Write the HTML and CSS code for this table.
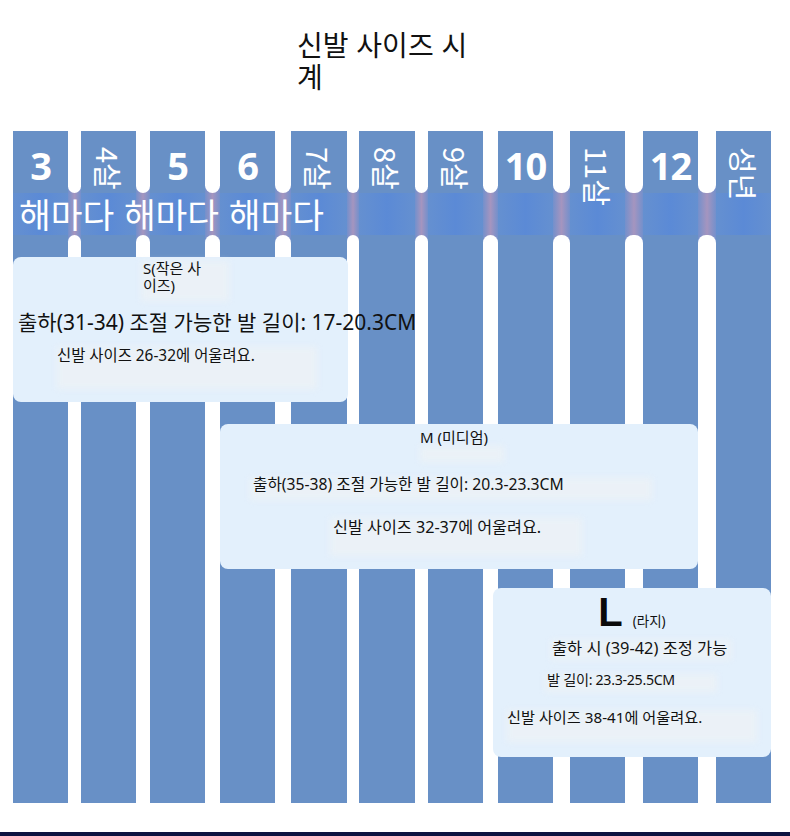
FILE: index.html
```html
<!DOCTYPE html>
<html lang="ko">
<head>
<meta charset="utf-8">
<title>신발 사이즈 시계</title>
<link rel="stylesheet" href="styles.css">
</head>
<body>
<div class="page">
  <h1 class="title">신발 사이즈 시계</h1>

  <div class="chart">
    <div class="col"><div class="lbl"><span class="num">3</span></div><div class="band"></div><div class="rest"></div></div>
    <div class="gap"><div class="gtop"></div><div class="gband"></div><div class="gbot"></div></div>
    <div class="col"><div class="lbl"><span class="vert">4살</span></div><div class="band"></div><div class="rest"></div></div>
    <div class="gap"><div class="gtop"></div><div class="gband"></div><div class="gbot"></div></div>
    <div class="col"><div class="lbl"><span class="num">5</span></div><div class="band"></div><div class="rest"></div></div>
    <div class="gap"><div class="gtop"></div><div class="gband"></div><div class="gbot"></div></div>
    <div class="col"><div class="lbl"><span class="num">6</span></div><div class="band"></div><div class="rest"></div></div>
    <div class="gap"><div class="gtop"></div><div class="gband"></div><div class="gbot"></div></div>
    <div class="col"><div class="lbl"><span class="vert">7살</span></div><div class="band"></div><div class="rest"></div></div>
    <div class="gap"><div class="gtop"></div><div class="gband"></div><div class="gbot"></div></div>
    <div class="col"><div class="lbl"><span class="vert">8살</span></div><div class="band"></div><div class="rest"></div></div>
    <div class="gap"><div class="gtop"></div><div class="gband"></div><div class="gbot"></div></div>
    <div class="col"><div class="lbl"><span class="vert">9살</span></div><div class="band"></div><div class="rest"></div></div>
    <div class="gap"><div class="gtop"></div><div class="gband"></div><div class="gbot"></div></div>
    <div class="col"><div class="lbl"><span class="num">10</span></div><div class="band"></div><div class="rest"></div></div>
    <div class="gap"><div class="gtop"></div><div class="gband"></div><div class="gbot"></div></div>
    <div class="col"><div class="lbl"><span class="vert">11살</span></div><div class="band"></div><div class="rest"></div></div>
    <div class="gap"><div class="gtop"></div><div class="gband"></div><div class="gbot"></div></div>
    <div class="col"><div class="lbl"><span class="num">12</span></div><div class="band"></div><div class="rest"></div></div>
    <div class="gap"><div class="gtop"></div><div class="gband"></div><div class="gbot"></div></div>
    <div class="col"><div class="lbl"><span class="vert">성년</span></div><div class="band"></div><div class="rest"></div></div>

    <div class="every">해마다 해마다 해마다</div>

    <div class="card card-s">
      <div class="ghost gs1"></div>
      <div class="ghost gs2"></div>
      <div class="s-title">S(작은 사이즈)</div>
      <div class="s-len">출하(31-34) 조절 가능한 발 길이: 17-20.3CM</div>
      <div class="s-fit">신발 사이즈 26-32에 어울려요.</div>
    </div>

    <div class="card card-m">
      <div class="ghost gm1"></div>
      <div class="ghost gm2"></div>
      <div class="ghost gm3"></div>
      <div class="m-title">M (미디엄)</div>
      <div class="m-len">출하(35-38) 조절 가능한 발 길이: 20.3-23.3CM</div>
      <div class="m-fit">신발 사이즈 32-37에 어울려요.</div>
    </div>

    <div class="card card-l">
      <div class="ghost gl1"></div>
      <div class="ghost gl2"></div>
      <div class="ghost gl3"></div>
      <div class="l-title"><span class="l-big">L</span><span class="l-small">(라지)</span></div>
      <div class="l-ship">출하 시 (39-42) 조정 가능</div>
      <div class="l-len">발 길이: 23.3-25.5CM</div>
      <div class="l-fit">신발 사이즈 38-41에 어울려요.</div>
    </div>
  </div>

  <div class="bottom-bar"></div>
</div>
</body>
</html>
```

FILE: styles.css
```css
* { box-sizing: border-box; }

html, body {
  margin: 0;
  padding: 0;
  background: #ffffff;
}

body {
  font-family: "Noto Sans", "Noto Sans CJK KR", sans-serif;
  color: #111;
}

.page {
  width: 790px;
  height: 836px;
  overflow: hidden;
  padding-top: 28px;
}

.title {
  margin: 0 0 0 297px;
  width: 178px;
  font-family: "Noto Sans CJK KR", sans-serif;
  font-weight: 400;
  font-size: 28px;
  line-height: 32px;
  color: #111;
}

.chart {
  position: relative;
  margin: 39px 0 0 13px;
  width: 758px;
  height: 672px;
  display: grid;
  grid-template-columns: 55px 13px 55px 14px 55px 15px 55px 16px 56px 12px 56px 13px 55px 15px 55px 17px 55px 18px 55px 18px 55px;
}

.col {
  display: flex;
  flex-direction: column;
  background: #6890c6;
}

.lbl {
  position: relative;
  z-index: 1;
  height: 62px;
  display: flex;
  justify-content: center;
  align-items: flex-start;
  color: #fff;
  overflow: visible;
}

.num {
  padding-top: 15px;
  font-family: "Noto Sans", sans-serif;
  font-weight: 700;
  font-size: 38px;
  line-height: 38px;
  letter-spacing: -1px;
}

.vert {
  margin-top: 16px;
  writing-mode: vertical-rl;
  text-orientation: sideways;
  font-family: "Noto Sans CJK KR", sans-serif;
  font-size: 29px;
  line-height: 34px;
  white-space: nowrap;
}

.band {
  height: 42px;
  background: linear-gradient(90deg, #6590d0, #5b8ad6 50%, #6590d0);
}

.rest {
  flex: 1;
}

.gap {
  display: flex;
  flex-direction: column;
  background: linear-gradient(90deg, #7390cc, #a595bf 50%, #7390cc);
}

.gtop {
  height: 62px;
  background: #fff;
  border-radius: 0 0 8px 8px;
}

.gband {
  height: 42px;
}

.gbot {
  flex: 1;
  background: #fff;
  border-radius: 8px 8px 0 0;
}

.every {
  position: absolute;
  z-index: 2;
  left: 6px;
  top: 61px;
  font-family: "Noto Sans CJK KR", sans-serif;
  font-size: 34.5px;
  line-height: 42px;
  color: #fff;
  white-space: nowrap;
}

.card {
  position: absolute;
  z-index: 2;
  background: #e3f0fc;
  border-radius: 8px;
  font-family: "Noto Sans", "Noto Sans CJK KR", sans-serif;
  color: #111;
  white-space: nowrap;
}

.ghost {
  position: absolute;
  background: rgba(238, 241, 246, 0.75);
  filter: blur(3px);
}

.card > div:not(.ghost) {
  position: relative;
}

/* S card */
.card-s {
  left: 0;
  top: 126px;
  width: 335px;
  height: 145px;
  padding-top: 3px;
}

.gs1 { left: 128px; top: 4px; width: 88px; height: 40px; }
.gs2 { left: 44px; top: 90px; width: 260px; height: 42px; }

.s-title {
  margin-left: 130px;
  width: 70px;
  white-space: normal;
  font-size: 15px;
  line-height: 17px;
}

.s-len {
  margin-top: 14px;
  margin-left: 5px;
  font-size: 21px;
  line-height: 28px;
}

.s-fit {
  margin-top: 10px;
  margin-left: 44px;
  font-size: 15.4px;
  line-height: 20px;
}

/* M card */
.card-m {
  left: 207px;
  top: 293px;
  width: 478px;
  height: 145px;
  padding-top: 3px;
}

.gm1 { left: 200px; top: 22px; width: 84px; height: 16px; }
.gm2 { left: 30px; top: 54px; width: 402px; height: 22px; }
.gm3 { left: 110px; top: 94px; width: 252px; height: 38px; }

.m-title {
  text-align: center;
  padding-right: 10px;
  font-size: 15px;
  line-height: 20px;
}

.m-len {
  margin-top: 27px;
  margin-left: 33px;
  font-size: 15.7px;
  line-height: 20px;
}

.m-fit {
  margin-top: 23px;
  margin-left: 113px;
  font-size: 16.2px;
  line-height: 20px;
}

/* L card */
.card-l {
  left: 480px;
  top: 457px;
  width: 278px;
  height: 169px;
  padding-top: 4px;
}

.gl1 { left: 58px; top: 52px; width: 180px; height: 20px; }
.gl2 { left: 52px; top: 86px; width: 172px; height: 18px; }
.gl3 { left: 14px; top: 122px; width: 250px; height: 32px; }

.l-title {
  text-align: center;
  line-height: 40px;
  height: 40px;
}

.l-big {
  font-family: "Liberation Sans", Arial, sans-serif;
  font-weight: 700;
  font-size: 40px;
  color: #0a0a0a;
}

.l-small {
  margin-left: 10px;
  font-size: 13.5px;
}

.l-ship {
  margin-top: 5px;
  margin-left: 59px;
  font-size: 16.4px;
  line-height: 22px;
}

.l-len {
  margin-top: 11px;
  margin-left: 54px;
  font-size: 14.2px;
  line-height: 20px;
  letter-spacing: -0.3px;
}

.l-fit {
  margin-top: 17px;
  margin-left: 14px;
  font-size: 15.2px;
  line-height: 20px;
}

.bottom-bar {
  margin-top: 29px;
  height: 4px;
  background: #0c1240;
}
```
